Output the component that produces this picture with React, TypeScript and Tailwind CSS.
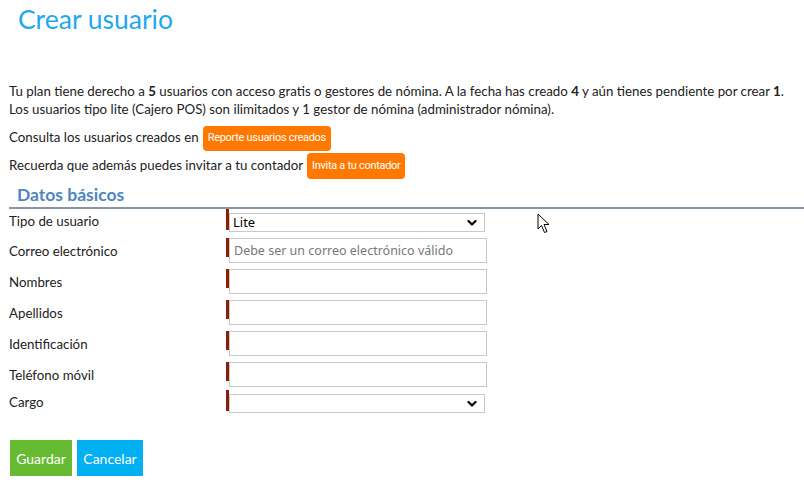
import React from "react";

const Chevron = () => (
  <svg width="10" height="7" viewBox="0 0 10 7" className="absolute right-[7px] top-1/2 -translate-y-1/2 pointer-events-none">
    <path d="M1.5 1.5 L5 5 L8.5 1.5" fill="none" stroke="#111" strokeWidth="2.4" strokeLinecap="round" strokeLinejoin="round" />
  </svg>
);

const ctrlFont = { fontFamily: '"Noto Sans", "Open Sans", sans-serif' };

function InputRow({ label, placeholder, h = "h-[31px]" }: { label: string; placeholder?: string; h?: string }) {
  return (
    <div className={`flex items-start ${h}`}>
      <div className="w-[217px] pt-[4px] text-[13.3px] leading-[18px] text-[#222]">{label}</div>
      <div className="flex items-start">
        <div className="w-[3px] h-[19px] bg-[#8b1e05]" />
        <input
          className="w-[258px] h-[25px] border border-[#c8c8cc] px-[4px] text-[12.5px] text-[#222] placeholder:text-[#777] outline-none"
          style={ctrlFont}
          placeholder={placeholder}
        />
      </div>
    </div>
  );
}

function SelectRow({ label, value, h }: { label: string; value: string; h: string }) {
  return (
    <div className={`flex items-start ${h}`}>
      <div className="w-[217px] pt-[3px] text-[13.3px] leading-[18px] text-[#222]">{label}</div>
      <div className="flex items-start">
        <div className="w-[3px] h-[21px] bg-[#8b1e05]" />
        <div className="relative mt-[4px] w-[256px] h-[19px] border border-[#c8c8cc] bg-white">
          <div className="pl-[3px] text-[13px] leading-[17px] text-black" style={ctrlFont}>{value}</div>
          <Chevron />
        </div>
      </div>
    </div>
  );
}

export default function App() {
  return (
    <div className="relative w-[804px] h-[496px] bg-white overflow-hidden" style={{ fontFamily: 'Lato, "Noto Sans", sans-serif' }}>
      <div className="pl-[18px] pt-[3px] text-[26.5px] leading-[32px] text-[#1fa8ee]">
        Crear usuario
      </div>
      <div className="pl-[9px] pt-[47px] text-[13.3px] leading-[18px] text-[#222]">
        <p>
          Tu plan tiene derecho a <b>5</b> usuarios con acceso gratis o gestores de nómina. A la fecha has creado <b>4</b> y aún tienes pendiente por crear <b>1</b>.
        </p>
        <p>Los usuarios tipo lite (Cajero POS) son ilimitados y 1 gestor de nómina (administrador nómina).</p>
      </div>
      <div className="pl-[9px] pt-[7px] text-[13.3px] text-[#222]">
        <div className="flex items-center h-[26px] gap-[4px]">
          <span>Consulta los usuarios creados en</span>
          <span className="h-[25px] px-[5px] flex items-center rounded-[4px] bg-[#ff7800] text-white text-[11px]" style={{ fontFamily: 'Roboto, sans-serif', letterSpacing: '-0.3px' }}>
            Reporte usuarios creados
          </span>
        </div>
        <div className="flex items-center h-[26px] mt-[2px] gap-[4px]">
          <span>Recuerda que además puedes invitar a tu contador</span>
          <span className="h-[26px] px-[5px] flex items-center rounded-[4px] bg-[#ff7800] text-white text-[11px]" style={{ fontFamily: 'Roboto, sans-serif', letterSpacing: '-0.3px' }}>
            Invita a tu contador
          </span>
        </div>
      </div>
      <div className="ml-[9px] mt-[4px] border-b-[2px] border-[#8696a4]">
        <div className="pl-[8px] text-[17.5px] leading-[24px] font-bold text-[#4f86c0]">Datos básicos</div>
      </div>
      <div className="pl-[9px]">
        <SelectRow label="Tipo de usuario" value="Lite" h="h-[29px]" />
        <InputRow label="Correo electrónico" placeholder="Debe ser un correo electrónico válido" />
        <InputRow label="Nombres" />
        <InputRow label="Apellidos" />
        <InputRow label="Identificación" />
        <InputRow label="Teléfono móvil" h="h-[28px]" />
        <SelectRow label="Cargo" value="" h="h-[28px]" />
      </div>
      <div className="pl-[10px] pt-[22px] flex gap-[5px]">
        <button className="w-[62px] h-[36px] bg-[#66bb33] text-white text-[14px]">Guardar</button>
        <button className="w-[66px] h-[36px] bg-[#00b0f0] text-white text-[14px]">Cancelar</button>
      </div>
      <svg className="absolute left-[537px] top-[213px]" width="14" height="21" viewBox="0 0 14 21">
        <path d="M1 1 L1 16 L4.5 12.5 L7.5 19.5 L10 18.5 L7 11.5 L12 11.5 Z" fill="white" stroke="black" strokeWidth="1" strokeLinejoin="round" />
      </svg>
    </div>
  );
}
